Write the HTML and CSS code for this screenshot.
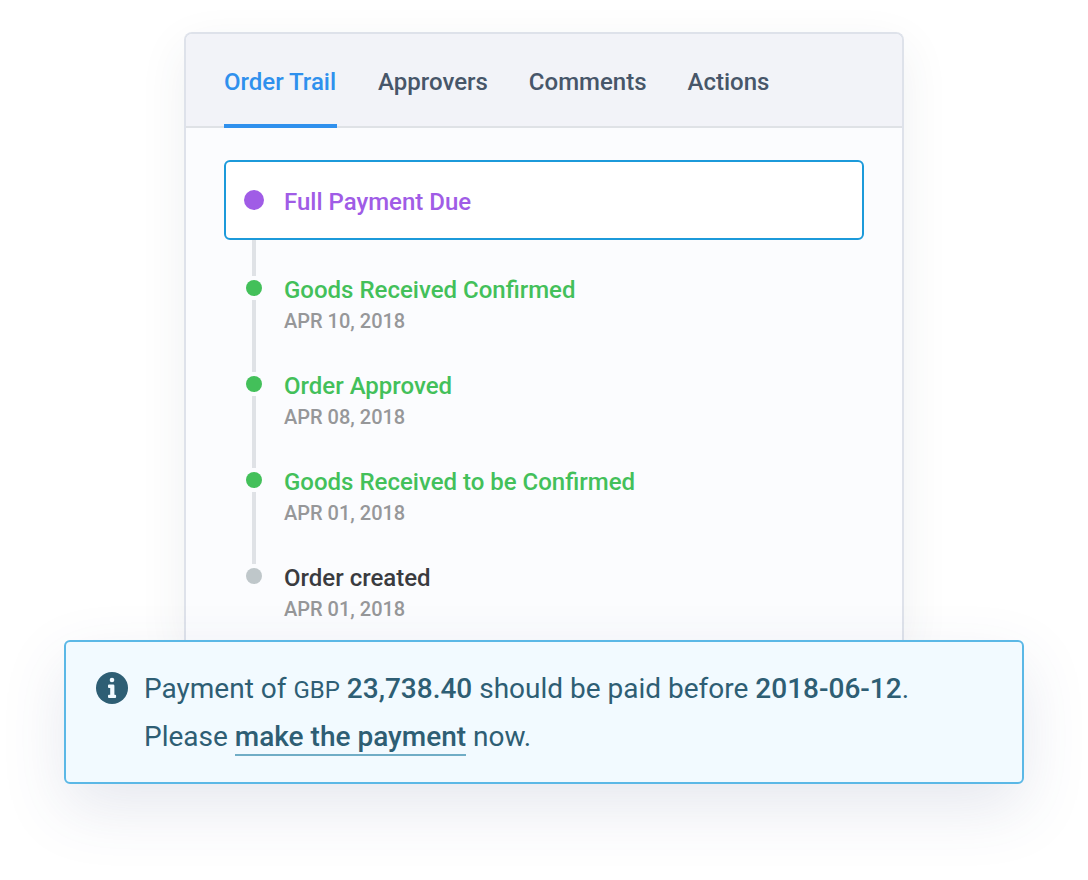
FILE: index.html
```html
<!DOCTYPE html>
<html lang="en">
<head>
<meta charset="utf-8">
<meta name="viewport" content="width=device-width, initial-scale=1">
<title>Order Trail</title>
<link rel="stylesheet" href="styles.css">
</head>
<body>
<main class="stage">
  <section class="card">
    <nav class="tabs">
      <button class="tab tab-active" type="button">Order Trail</button>
      <button class="tab" type="button">Approvers</button>
      <button class="tab" type="button">Comments</button>
      <button class="tab" type="button">Actions</button>
    </nav>
    <ol class="trail">
      <li class="current"><span class="dot"></span><span class="title">Full Payment Due</span></li>
      <li class="step done"><span class="rail rail-short"></span><span class="dot"></span><div class="info"><span class="title">Goods Received Confirmed</span><time class="date" datetime="2018-04-10">APR 10, 2018</time></div></li>
      <li class="step done"><span class="rail"></span><span class="dot"></span><div class="info"><span class="title">Order Approved</span><time class="date" datetime="2018-04-08">APR 08, 2018</time></div></li>
      <li class="step done"><span class="rail"></span><span class="dot"></span><div class="info"><span class="title">Goods Received to be Confirmed</span><time class="date" datetime="2018-04-01">APR 01, 2018</time></div></li>
      <li class="step"><span class="rail"></span><span class="dot"></span><div class="info"><span class="title">Order created</span><time class="date" datetime="2018-04-01">APR 01, 2018</time></div></li>
    </ol>
  </section>
  <aside class="notice">
    <svg class="icon" viewBox="0 0 32 32" aria-hidden="true"><circle cx="16" cy="16" r="16" fill="#2e5e74"/><circle cx="16" cy="8" r="2.300" fill="#f2faff"/><path d="M13 12.500h4.200a1.200 1.200 0 0 1 1.200 1.200V22.800h.7a1 1 0 0 1 1 1V25a1 1 0 0 1-1 1H13a1 1 0 0 1-1-1v-1.200a1 1 0 0 1 1-1h1.200V16H13a1 1 0 0 1-1-1v-1.500a1 1 0 0 1 1-1z" fill="#f2faff"/></svg>
    <p class="message">Payment of <span class="currency">GBP</span> <strong>23,738.40</strong> should be paid before <strong>2018-06-12</strong>.<br>Please <a class="link" href="#pay">make the payment</a> now.</p>
  </aside>
</main>
</body>
</html>
```
FILE: styles.css
```css
* { box-sizing: border-box; }
body { margin: 0; background: #fff; font-family: Roboto, "Liberation Sans", sans-serif; }
.stage { padding: 32px 64px 96px; }
.card {
  max-width: 720px;
  margin: 0 auto;
  border: 2px solid #dee2ea;
  border-bottom: 0;
  border-radius: 8px 8px 0 0;
  background: #fbfcfe;
  box-shadow: 0 16px 48px rgba(50, 60, 80, 0.08);
}
.tabs {
  display: flex;
  gap: 41px;
  padding: 0 38px;
  border-bottom: 2px solid #dfe2e6;
  border-radius: 6px 6px 0 0;
  background: #f2f3f8;
}
.tab {
  height: 94px;
  margin-bottom: -2px;
  padding: 6px 0 0;
  border: 0;
  border-bottom: 4px solid transparent;
  background: none;
  color: #475669;
  font: 500 24px/32px Roboto, "Liberation Sans", sans-serif;
}
.tab-active { padding-right: 1px; border-color: #2f90ed; color: #2f90ed; }
.trail { margin: 0; padding: 32px 38px 16px; list-style: none; }
.title { font-size: 24px; font-weight: 500; line-height: 32px; }
.current {
  display: flex;
  align-items: center;
  gap: 20px;
  height: 80px;
  padding: 0 18px;
  border: 2px solid #1c9ada;
  border-radius: 6px;
  background: #fff;
  color: #a05ce6;
}
.current .title { padding-top: 4px; }
.dot { flex: none; border-radius: 50%; background: currentColor; }
.current .dot { width: 20px; height: 20px; }
.step {
  display: grid;
  grid-template-columns: 20px 1fr;
  grid-template-rows: 34px auto;
  column-gap: 20px;
  padding-left: 20px;
  color: #bfc7ca;
}
.done { color: #43c05a; }
.rail { width: 4px; height: 72px; margin-top: -36px; justify-self: center; background: #dfe2e6; }
.rail-short { height: 36px; margin-top: 0; }
.step .dot { grid-row: 2; width: 16px; height: 16px; margin-top: 6px; justify-self: center; }
.info { grid-row: 2; grid-column: 2; display: grid; height: 62px; align-content: start; }
.step .title { color: #3a3b3f; }
.done .title { color: #43c05a; }
.date { color: #969799; font-size: 20px; font-weight: 500; line-height: 30px; }
.notice {
  position: relative;
  display: flex;
  gap: 16px;
  max-width: 960px;
  margin: 0 auto;
  padding: 23px 30px 21px;
  border: 2px solid #5bb8e6;
  border-radius: 6px;
  background: #f2faff;
  color: #2e5e74;
  box-shadow: 0 24px 64px rgba(60, 80, 130, 0.13);
}
.icon { flex: none; width: 32px; height: 32px; margin-top: 7px; }
.message { margin: 0; font-size: 28px; line-height: 48px; }
.message strong { font-weight: 500; }
.currency { font-size: 24px; line-height: 24px; }
.link { padding-bottom: 1px; border-bottom: 2px solid #70adc6; color: inherit; font-weight: 500; text-decoration: none; }
```
